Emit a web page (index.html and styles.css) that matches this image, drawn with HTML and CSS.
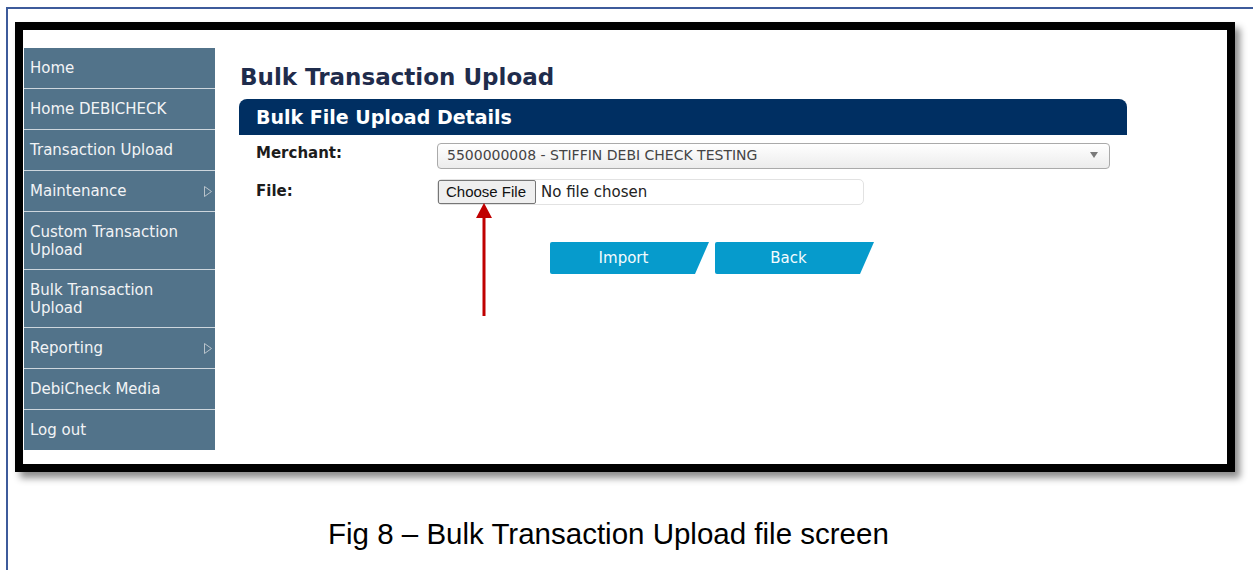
FILE: index.html
```html
<!DOCTYPE html>
<html lang="en">
<head>
<meta charset="utf-8">
<title>Bulk Transaction Upload</title>
<link rel="stylesheet" href="styles.css">
</head>
<body>
<div class="doc">
  <div class="frame">
    <nav class="sidebar">
      <a class="nav-item">Home</a>
      <a class="nav-item">Home DEBICHECK</a>
      <a class="nav-item">Transaction Upload</a>
      <a class="nav-item has-sub">Maintenance
        <svg class="sub-caret" width="8" height="11" viewBox="0 0 8 11"><polygon points="0.5,0.5 7.5,5.5 0.5,10.5" fill="none" stroke="#b9c3cb" stroke-width="1"/></svg>
      </a>
      <a class="nav-item two-line">Custom Transaction<br>Upload</a>
      <a class="nav-item two-line">Bulk Transaction<br>Upload</a>
      <a class="nav-item has-sub">Reporting
        <svg class="sub-caret" width="8" height="11" viewBox="0 0 8 11"><polygon points="0.5,0.5 7.5,5.5 0.5,10.5" fill="none" stroke="#b9c3cb" stroke-width="1"/></svg>
      </a>
      <a class="nav-item">DebiCheck Media</a>
      <a class="nav-item last">Log out</a>
    </nav>

    <main class="content">
      <h1 class="page-title">Bulk Transaction Upload</h1>
      <section class="panel">
        <h2 class="panel-title">Bulk File Upload Details</h2>
        <div class="form-row">
          <label class="field-label merchant">Merchant:</label>
          <div class="select">
            <span class="select-value">5500000008 - STIFFIN DEBI CHECK TESTING</span>
            <svg class="select-caret" width="8" height="6" viewBox="0 0 8 6"><polygon points="0,0 8,0 4,6" fill="#7a7a7a"/></svg>
          </div>
        </div>
        <div class="form-row file-row">
          <label class="field-label file">File:</label>
          <div class="file-input">
            <span class="file-btn">Choose File</span>
            <span class="file-name">No file chosen</span>
          </div>
        </div>
        <div class="actions">
          <a class="btn">Import</a>
          <a class="btn">Back</a>
        </div>
      </section>
    </main>

    <svg class="callout-arrow" width="16" height="113" viewBox="0 0 16 113">
      <polygon points="8,0 16,15 0,15" fill="#c00000"/>
      <rect x="6.5" y="14" width="3" height="99" fill="#c00000"/>
    </svg>
  </div>

  <p class="caption">Fig 8 – Bulk Transaction Upload file screen</p>
</div>
</body>
</html>
```

FILE: styles.css
```css
html, body {
  margin: 0;
  padding: 0;
  background: #ffffff;
  overflow: hidden;
}

body {
  font-family: "DejaVu Sans", Verdana, sans-serif;
}

/* page outline of the document */
.doc {
  margin: 7px 0 0 6px;
  border-top: 2px solid #3d5b9b;
  border-left: 2px solid #3d5b9b;
  min-height: 100vh;
}

/* black picture frame around the app */
.frame {
  position: relative;
  box-sizing: border-box;
  width: 1220px;
  height: 450px;
  margin: 13px 0 0 7px;
  border: 8px solid #000;
  background: #fff;
  box-shadow: 5px 6px 7px rgba(0, 0, 0, 0.45);
  display: flex;
  align-items: flex-start;
  padding: 18px 0 0 1px;
}

/* left navigation */
.sidebar {
  width: 191px;
  flex: none;
  display: flex;
  flex-direction: column;
  background: #52738a;
}

.nav-item {
  display: flex;
  align-items: center;
  justify-content: space-between;
  padding: 11px 3px 11px 6px;
  font-size: 15px;
  line-height: 18px;
  color: #f2f4f6;
  border-bottom: 1px solid #cdd6dd;
  cursor: pointer;
}

.nav-item.two-line {
  padding-bottom: 10px;
}

.nav-item.last {
  border-bottom: none;
}

.sub-caret {
  flex: none;
}

/* main area */
.content {
  width: 888px;
  margin-left: 24px;
  padding-top: 16px;
}

.page-title {
  margin: 0 0 8px 1px;
  font-size: 23px;
  line-height: 27px;
  font-weight: bold;
  color: #1f2c4c;
}

.panel-title {
  margin: 0;
  height: 36px;
  padding-left: 17px;
  font-size: 19px;
  line-height: 36px;
  font-weight: bold;
  color: #ffffff;
  background: #002f62;
  border-radius: 8px 8px 0 0;
}

.form-row {
  display: flex;
  align-items: flex-start;
  margin-top: 8px;
}

.form-row.file-row {
  margin-top: 10px;
}

.field-label {
  width: 181px;
  flex: none;
  padding-left: 17px;
  font-size: 15px;
  line-height: 18px;
  font-weight: bold;
  color: #1c1c1c;
}

.field-label.merchant {
  padding-top: 1px;
}

.field-label.file {
  padding-top: 3px;
}

.select {
  box-sizing: border-box;
  width: 673px;
  height: 26px;
  display: flex;
  align-items: flex-start;
  justify-content: space-between;
  padding: 0 11px 2px 9px;
  border: 1px solid #aaaaaa;
  border-radius: 4px;
  background: linear-gradient(#ffffff, #ececec);
  font-size: 14px;
  line-height: 22px;
  color: #444444;
}

.select-caret {
  margin-top: 8px;
}

.file-input {
  box-sizing: border-box;
  width: 427px;
  height: 26px;
  display: flex;
  align-items: center;
  border: 1px solid #e2e2e2;
  border-radius: 5px;
}

.file-btn {
  box-sizing: border-box;
  width: 98px;
  height: 24px;
  padding-left: 7px;
  border: 1px solid #767676;
  border-radius: 2px;
  background: #efefef;
  font-family: "Liberation Sans", Arial, sans-serif;
  font-size: 15px;
  line-height: 22px;
  color: #111111;
}

.file-name {
  margin-left: 5px;
  font-size: 15px;
  line-height: 18px;
  color: #222222;
}

/* slanted action buttons */
.actions {
  display: flex;
  gap: 6px;
  margin-top: 37px;
  padding-left: 311px;
}

.btn {
  box-sizing: border-box;
  width: 159px;
  height: 32px;
  padding-right: 12px;
  text-align: center;
  font-size: 15px;
  line-height: 32px;
  color: #f4fbfe;
  background: #069bcc;
  border-radius: 2px 0 0 2px;
  clip-path: polygon(0 0, 100% 0, calc(100% - 14px) 100%, 0 100%);
  cursor: pointer;
}

/* red pointer drawn over the form */
.callout-arrow {
  position: absolute;
  left: 453px;
  top: 173px;
}

.caption {
  margin: 45px 0 0 320px;
  font-family: "Liberation Sans", Arial, sans-serif;
  font-size: 29.5px;
  line-height: 33px;
  color: #000000;
}
```
